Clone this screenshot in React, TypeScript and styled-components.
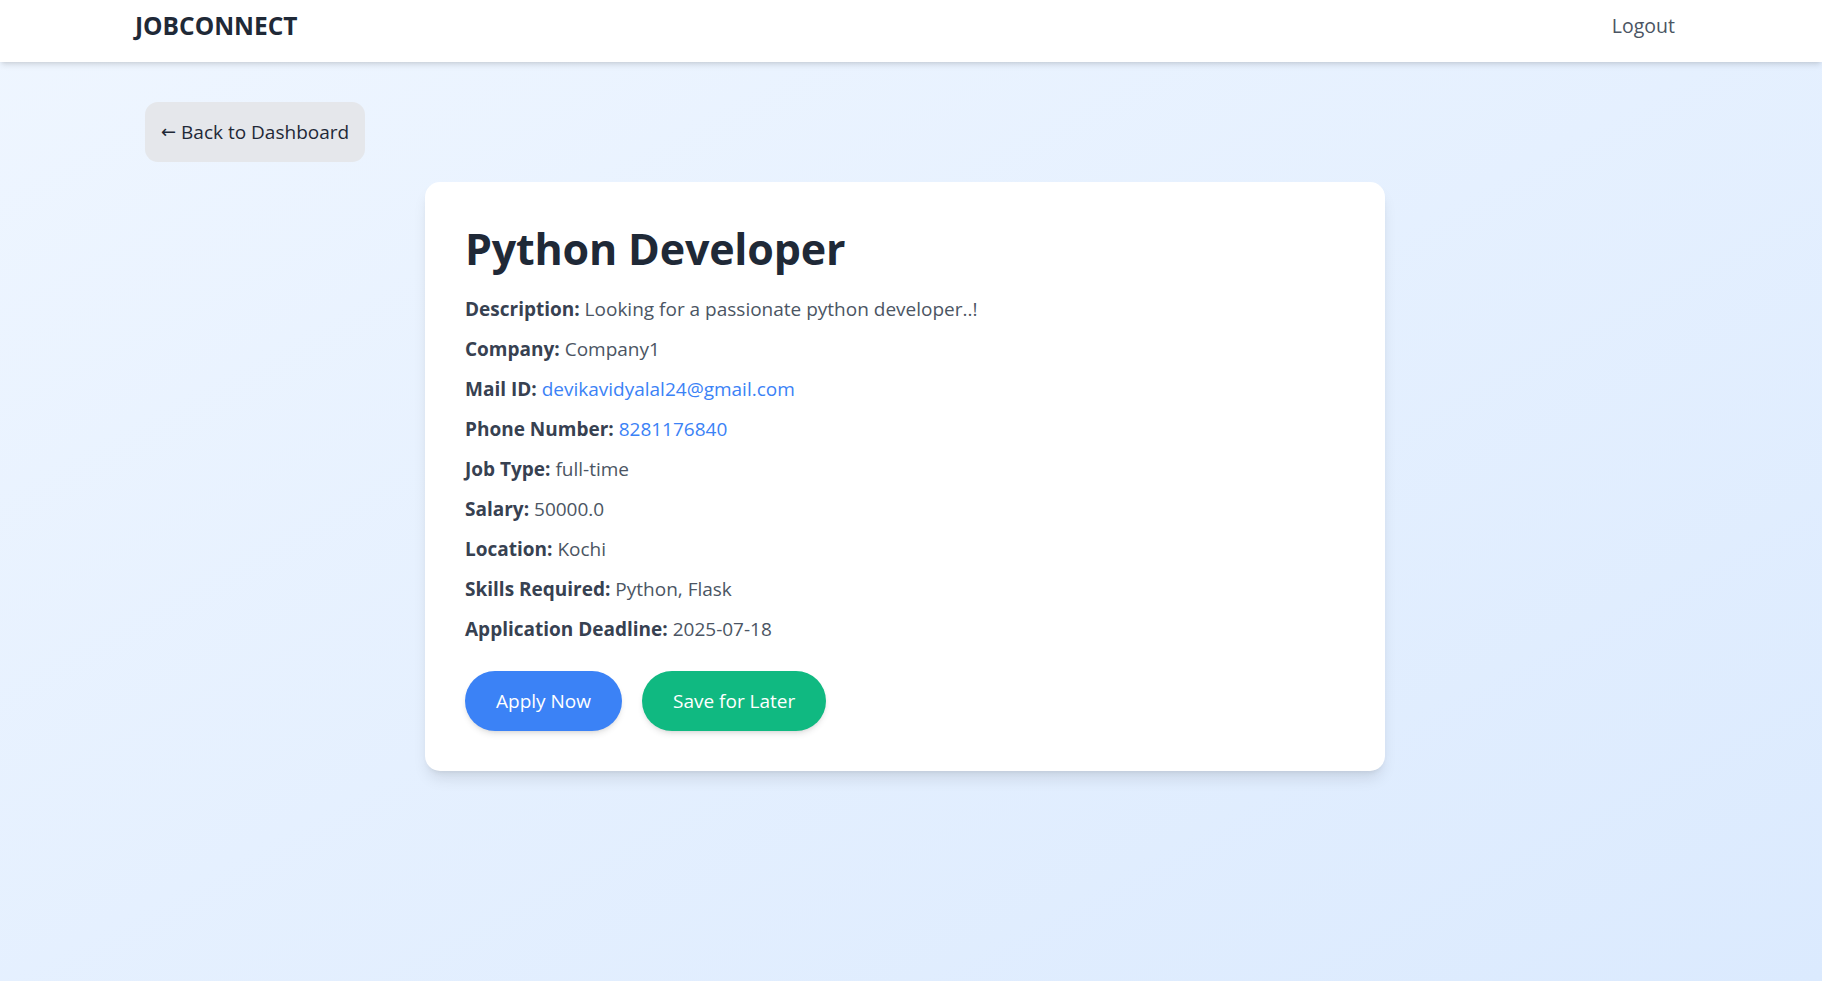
import React from "react";
import styled, { createGlobalStyle } from "styled-components";

const GlobalStyle = createGlobalStyle`
  * { box-sizing: border-box; }
  html, body { margin: 0; padding: 0; }
  body {
    font-family: "Open Sans", "Noto Sans", sans-serif;
    color: #1f2937;
  }
`;

const Page = styled.div`
  min-height: 981px;
  background: linear-gradient(to bottom right, #eff6ff, #dbeafe);
`;

const Header = styled.header`
  height: 62px;
  background: #ffffff;
  box-shadow: 0 4px 6px -1px rgba(0, 0, 0, 0.1), 0 2px 4px -2px rgba(0, 0, 0, 0.1);
`;

const HeaderInner = styled.div`
  width: 1600px;
  margin-left: 105px;
  padding: 8px 30px 0;
  display: flex;
  align-items: flex-start;
  justify-content: space-between;
`;

const Logo = styled.div`
  font-size: 24.5px;
  line-height: 35px;
  font-weight: 700;
  color: #1f2937;
`;

const LogoutLink = styled.a`
  font-size: 19.5px;
  line-height: 35px;
  color: #4b5563;
  text-decoration: none;
  cursor: pointer;
`;

const Main = styled.main`
  width: 1600px;
  margin-left: 105px;
  padding: 40px 40px 0;
`;

const BackButton = styled.button`
  display: inline-flex;
  align-items: center;
  gap: 5px;
  height: 60px;
  padding: 0 16px;
  border: none;
  border-radius: 13px;
  background: #e5e7eb;
  color: #1f2937;
  font-family: inherit;
  font-size: 19px;
  line-height: 30px;
  cursor: pointer;
`;

const Arrow = styled.span`
  font-family: "DejaVu Sans", sans-serif;
  font-size: 18px;
`;

const Card = styled.section`
  width: 960px;
  margin: 20px auto 0;
  background: #ffffff;
  border-radius: 15px;
  padding: 42px 40px 40px;
  box-shadow: 0 10px 15px -3px rgba(0, 0, 0, 0.1), 0 4px 6px -4px rgba(0, 0, 0, 0.1);
`;

const Title = styled.h1`
  margin: 0 0 20px;
  font-size: 43px;
  line-height: 50px;
  font-weight: 700;
  color: #1f2937;
  letter-spacing: -0.2px;
`;

const Row = styled.p`
  margin: 0 0 10px;
  font-size: 19px;
  line-height: 30px;
  color: #4b5563;
`;

const Label = styled.strong`
  font-weight: 700;
  color: #374151;
`;

const LinkValue = styled.a`
  color: #3b82f6;
  text-decoration: none;
`;

const Actions = styled.div`
  display: flex;
  gap: 20px;
  margin-top: 27px;
`;

const ActionButton = styled.button<{ $bg: string }>`
  height: 60px;
  padding: 0 31px;
  border: none;
  border-radius: 9999px;
  background: ${(p) => p.$bg};
  color: #ffffff;
  font-family: inherit;
  font-size: 19px;
  line-height: 30px;
  box-shadow: 0 4px 6px -1px rgba(0, 0, 0, 0.1), 0 2px 4px -2px rgba(0, 0, 0, 0.1);
  cursor: pointer;
`;

const rows: { label: string; value: string; href?: string }[] = [
  { label: "Description:", value: "Looking for a passionate python developer..!" },
  { label: "Company:", value: "Company1" },
  { label: "Mail ID:", value: "devikavidyalal24@gmail.com", href: "mailto:devikavidyalal24@gmail.com" },
  { label: "Phone Number:", value: "8281176840", href: "tel:8281176840" },
  { label: "Job Type:", value: "full-time" },
  { label: "Salary:", value: "50000.0" },
  { label: "Location:", value: "Kochi" },
  { label: "Skills Required:", value: "Python, Flask" },
  { label: "Application Deadline:", value: "2025-07-18" },
];

export default function App() {
  return (
    <>
      <GlobalStyle />
      <Page>
        <Header>
          <HeaderInner>
            <Logo>JOBCONNECT</Logo>
            <LogoutLink>Logout</LogoutLink>
          </HeaderInner>
        </Header>
        <Main>
          <BackButton>
            <Arrow>←</Arrow>
            <span>Back to Dashboard</span>
          </BackButton>
          <Card>
            <Title>Python Developer</Title>
            {rows.map((r) => (
              <Row key={r.label}>
                <Label>{r.label}</Label>{" "}
                {r.href ? <LinkValue href={r.href}>{r.value}</LinkValue> : r.value}
              </Row>
            ))}
            <Actions>
              <ActionButton $bg="#3b82f6">Apply Now</ActionButton>
              <ActionButton $bg="#10b981">Save for Later</ActionButton>
            </Actions>
          </Card>
        </Main>
      </Page>
    </>
  );
}
